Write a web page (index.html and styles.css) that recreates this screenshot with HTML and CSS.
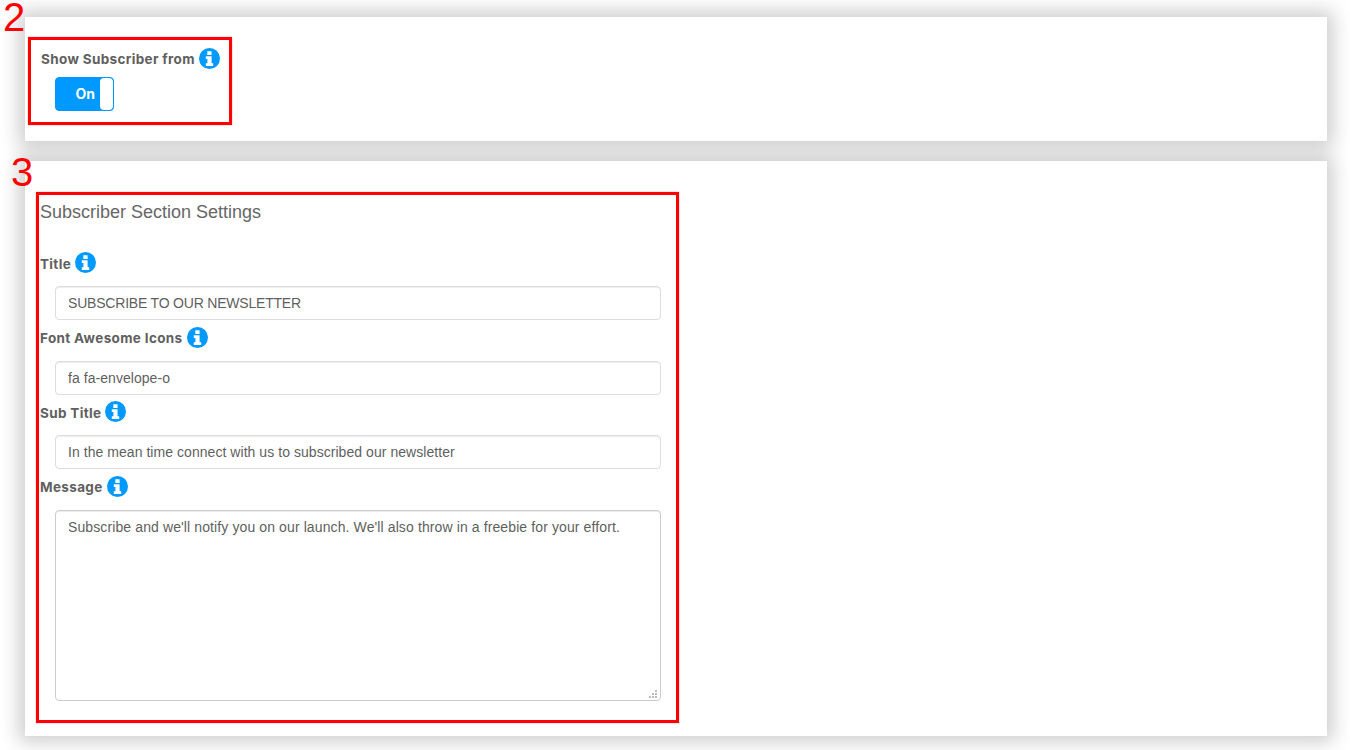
FILE: index.html
```html
<!DOCTYPE html>
<html lang="en">
<head>
<meta charset="utf-8">
<title>Subscriber Settings</title>
<link rel="stylesheet" href="styles.css">
</head>
<body>
<svg class="sprite" width="0" height="0" aria-hidden="true">
  <symbol id="info" viewBox="0 0 21 21">
    <circle cx="10.5" cy="10.5" r="10.5" fill="#0099ff"/>
    <path fill="#fff" d="M8.300 3.200h4.300v3.700H8.300zM6.800 8.200h5.800v7h1.600v2.700H6.800v-2.700h1.600v-4.300H6.800z"/>
  </symbol>
</svg>
<main class="page">
  <section class="card card-top">
    <span class="step step-two">2</span>
    <div class="mark mark-top">
      <div class="label-row">
        <span class="label">Show Subscriber from</span>
        <svg class="info"><use href="#info"/></svg>
      </div>
      <div class="toggle"><span class="toggle-text">On</span><span class="toggle-knob"></span></div>
    </div>
  </section>
  <section class="card card-main">
    <span class="step step-three">3</span>
    <div class="mark mark-main">
      <h2 class="heading">Subscriber Section Settings</h2>
      <div class="label-row row-title">
        <span class="label">Title</span>
        <svg class="info"><use href="#info"/></svg>
      </div>
      <input class="field field-caps" type="text" value="SUBSCRIBE TO OUR NEWSLETTER">
      <div class="label-row row-next">
        <span class="label">Font Awesome Icons</span>
        <svg class="info"><use href="#info"/></svg>
      </div>
      <input class="field" type="text" value="fa fa-envelope-o">
      <div class="label-row row-next">
        <span class="label">Sub Title</span>
        <svg class="info"><use href="#info"/></svg>
      </div>
      <input class="field" type="text" value="In the mean time connect with us to subscribed our newsletter">
      <div class="label-row row-next">
        <span class="label">Message</span>
        <svg class="info"><use href="#info"/></svg>
      </div>
      <textarea class="field area">Subscribe and we'll notify you on our launch. We'll also throw in a freebie for your effort.</textarea>
    </div>
  </section>
</main>
</body>
</html>
```
FILE: styles.css
```css
* { box-sizing: border-box; }
html, body { margin: 0; padding: 0; height: 750px; overflow: hidden; background: #fff; }
body { font-family: "Liberation Sans", Arial, sans-serif; color: #5f5f5f; }
.sprite { position: absolute; }
.page { padding: 17px 23px 0 25px; display: flex; flex-direction: column; gap: 20px; }
.card { position: relative; background: #fff; box-shadow: 0 0 18px 6px rgba(0, 0, 0, 0.2); }
.card-top { height: 124px; padding: 20px 3px; }
.card-main { height: 575px; padding: 31px 11px; }
.step { position: absolute; color: #f00; font-size: 40px; line-height: 30px; }
.step-two { left: -22px; top: -15px; }
.step-three { left: -14px; top: -4px; }
.mark { border: 3px solid #f00; box-shadow: 0 0 1px rgba(255, 0, 0, 0.6); }
.mark-top { width: 204px; height: 88px; padding: 8px 0 0 10px; }
.mark-main { width: 643px; height: 531px; padding: 0 15px 0 1px; }
.label-row { display: flex; align-items: center; height: 21px; gap: 4px; }
.label { margin-top: 2px; font-family: Inter, "Liberation Sans", sans-serif; font-weight: 700; font-size: 13.5px; letter-spacing: 0.35px; color: #5f5f5f; }
.mark-top .label { margin-top: 0; }
.info { width: 21px; height: 21px; flex: none; }
.toggle { width: 59px; height: 34px; margin: 8px 0 0 14px; display: flex; background: #0099ff; border: 1px solid #0099ff; border-radius: 4px; overflow: hidden; }
.toggle-text { flex: 1; color: #fff; font-family: Inter, "Liberation Sans", sans-serif; font-weight: 700; font-size: 14px; line-height: 32px; text-align: right; padding-right: 5px; }
.toggle-knob { width: 13px; background: #fff; border-radius: 4px; }
.heading { margin: 0; height: 35px; font-size: 18px; font-weight: 400; line-height: 34px; color: #666; }
.row-title { margin-top: 22px; margin-bottom: 13px; }
.row-next { margin-top: 6.67px; margin-bottom: 13px; }
.field { display: block; width: 606px; height: 34px; margin-left: 15px; padding: 6px 12px; border: 1px solid #ddd; border-radius: 4px; background: #fff; color: #5f5f5f; font-family: "Liberation Sans", Arial, sans-serif; font-size: 14px; letter-spacing: 0.05px; box-shadow: inset 0 1px 1px rgba(0, 0, 0, 0.075); outline: none; }
.field-caps { letter-spacing: -0.2px; }
.area { height: 191px; line-height: 20px; letter-spacing: 0.11px; resize: vertical; border-color: #ccc; }
.area::-webkit-resizer { background: url("data:image/svg+xml,%3Csvg xmlns='http://www.w3.org/2000/svg' width='15' height='15' fill='%23bbb'%3E%3Crect x='10' y='5' width='2' height='2'/%3E%3Crect x='7' y='8' width='2' height='2'/%3E%3Crect x='10' y='8' width='2' height='2'/%3E%3Crect x='4' y='11' width='2' height='2'/%3E%3Crect x='7' y='11' width='2' height='2'/%3E%3Crect x='10' y='11' width='2' height='2'/%3E%3C/svg%3E") no-repeat; }
```
